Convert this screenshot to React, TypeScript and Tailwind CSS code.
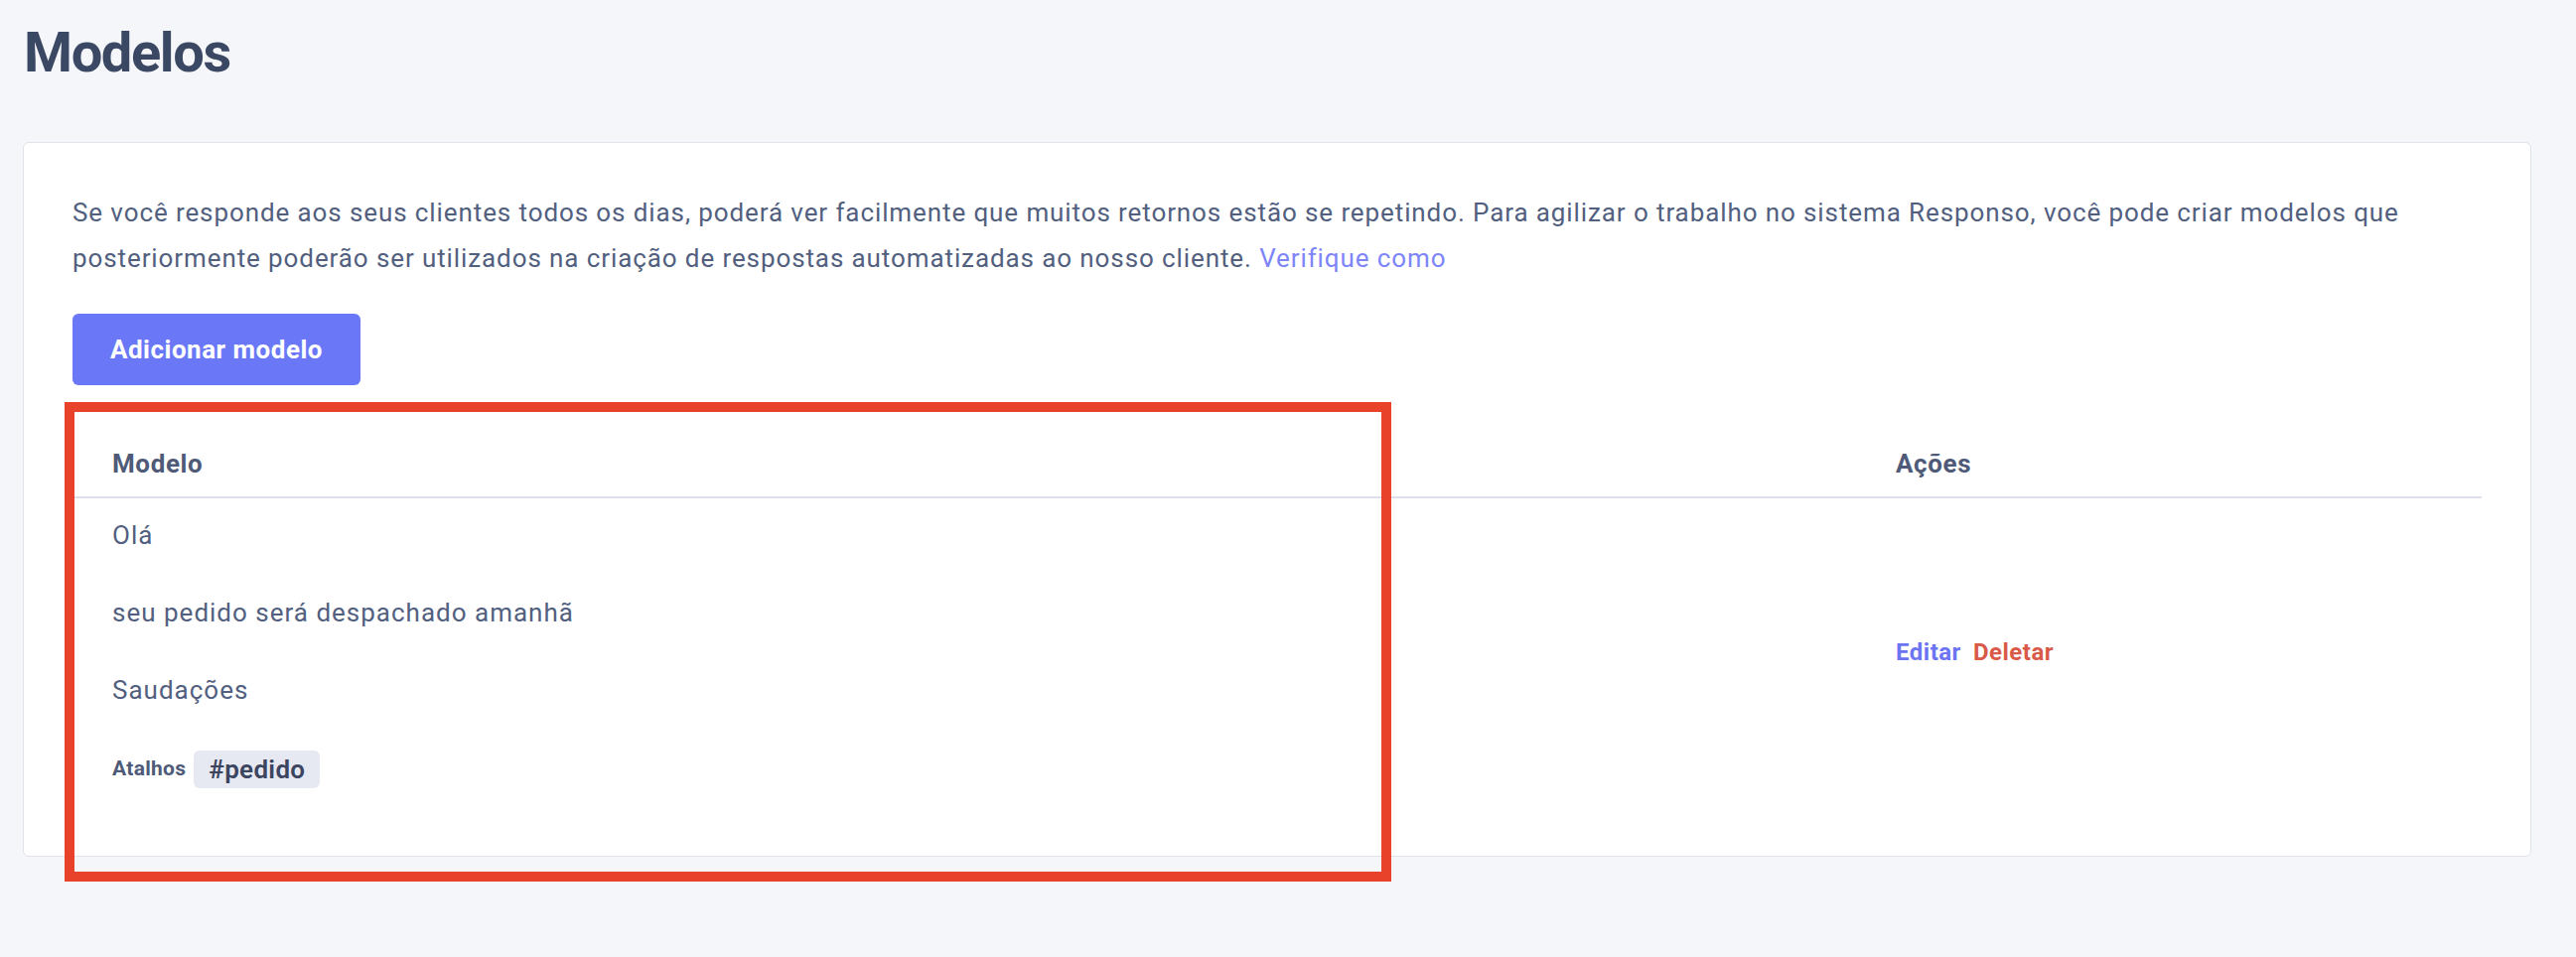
const rows = ["Olá", "seu pedido será despachado amanhã", "Saudações"];

export default function App() {
  return (
    <div className="relative min-h-screen bg-[#f5f6fa] pl-[23px] pr-[45px] pt-[20px] pb-[80px] font-['Roboto',sans-serif]">
      <h1 className="pl-[1px] text-[56px] leading-[67px] font-bold tracking-tight text-[#3b4863]">Modelos</h1>

      <div className="mt-[56px] rounded-[6px] border border-[#e0e2ec] bg-white px-[49px] pt-[47px] pb-[51px]">
        <p className="text-[26px] leading-[46px] tracking-[0.9px] text-[#525f7f]">
          Se você responde aos seus clientes todos os dias, poderá ver facilmente que muitos retornos estão se
          repetindo. Para agilizar o trabalho no sistema Responso, você pode criar modelos que posteriormente
          poderão ser utilizados na criação de respostas automatizadas ao nosso cliente.{" "}
          <a href="#" className="text-[#7d85f8]">Verifique como</a>
        </p>

        <button className="mt-[33px] h-[72px] rounded-[6px] bg-[#6a78f8] px-[38px] text-[26px] font-bold tracking-[0.5px] text-white">
          Adicionar modelo
        </button>

        {/* Table */}
        <div className="mt-[46px]">
          <div className="grid grid-cols-[1796px_1fr] border-b-2 border-[#dde0ea] text-[26px] leading-[46px] font-bold tracking-[0.6px] text-[#4e5a78]">
            <div className="px-[40px] py-[10px]">Modelo</div>
            <div className="px-[40px] py-[10px]">Ações</div>
          </div>
          <div className="grid grid-cols-[1796px_1fr]">
            <div className="px-[40px] pt-[14px] pb-[11px]">
              {rows.map((r) => (
                <p key={r} className="mb-[32px] text-[26px] leading-[46px] tracking-[1px] text-[#525f7f]">{r}</p>
              ))}
              <div className="flex h-[50px] items-center gap-[8px]">
                <span className="text-[21px] font-bold tracking-[0.3px] text-[#4e5a78]">Atalhos</span>
                <span className="rounded-[6px] bg-[#e6e8f2] px-[15px] text-[26px] leading-[38px] font-semibold tracking-[0.3px] text-[#3b4560]">
                  #pedido
                </span>
              </div>
            </div>
            <div className="flex items-center gap-[12px] px-[40px] text-[24px] font-bold tracking-[0.5px]">
              <a href="#" className="text-[#6c74f2]">Editar</a>
              <a href="#" className="text-[#d95a48]">Deletar</a>
            </div>
          </div>
        </div>
      </div>

      {/* annotation box */}
      <div className="pointer-events-none absolute left-[65px] top-[405px] h-[483px] w-[1336px] border-[10px] border-[#e8432a]" />
    </div>
  );
}
